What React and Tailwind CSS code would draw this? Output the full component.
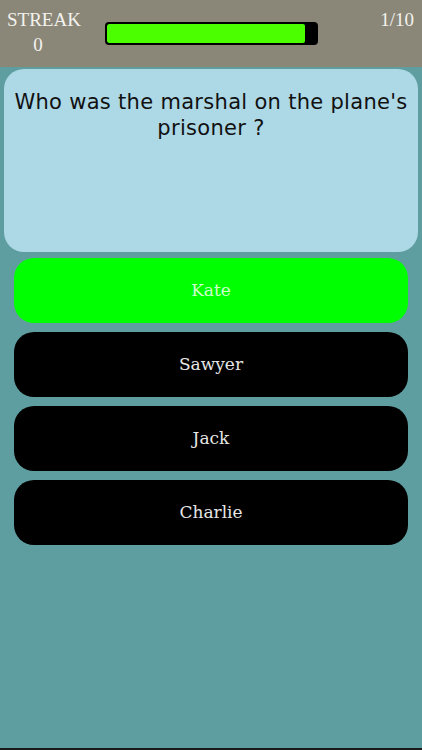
export default function App() {
  const answers = [
    { t: "Kate", ok: true },
    { t: "Sawyer" },
    { t: "Jack" },
    { t: "Charlie" },
  ];
  return (
    <div className="w-[422px] h-[750px] bg-[#5f9ea0] flex flex-col border-b-2 border-[#1a1a1a] overflow-hidden">
      <div className="h-[67px] bg-[#8b8778] flex items-start px-[7px] pt-[7px] text-[#f2f2ee]" style={{ fontFamily: '"Liberation Serif", serif' }}>
        <div className="flex flex-col items-center text-[19px] leading-[25px]">
          <span>STREAK</span>
          <span className="mr-[12px]">0</span>
        </div>
        <div className="mt-[15px] ml-[24px] w-[213px] h-[23px] rounded-[4px] border-2 border-black bg-black overflow-hidden">
          <div className="h-full bg-[#4cff00] rounded-[2px]" style={{ width: "95%" }} />
        </div>
        <div className="ml-auto text-[19px] leading-[25px] pr-[1px]">1/10</div>
      </div>
      <div className="mx-[4px] mt-[2px] h-[183px] rounded-[20px] bg-[#add8e6] px-1 pt-[20px] text-center text-[21px] leading-[26px] tracking-[0.3px] text-[#111]" style={{ fontFamily: '"DejaVu Sans", sans-serif' }}>
        Who was the marshal on the plane's prisoner ?
      </div>
      <div className="flex flex-col gap-[9px] mx-[14px] mt-[6px]">
        {answers.map((a) => (
          <div
            key={a.t}
            className={`h-[65px] rounded-[20px] flex items-center justify-center text-[17px] ${a.ok ? "bg-[#00ff00] text-white/80" : "bg-black text-[#e6e6e6]"}`}
            style={{ fontFamily: '"DejaVu Serif", serif' }}
          >
            {a.t}
          </div>
        ))}
      </div>
    </div>
  );
}
